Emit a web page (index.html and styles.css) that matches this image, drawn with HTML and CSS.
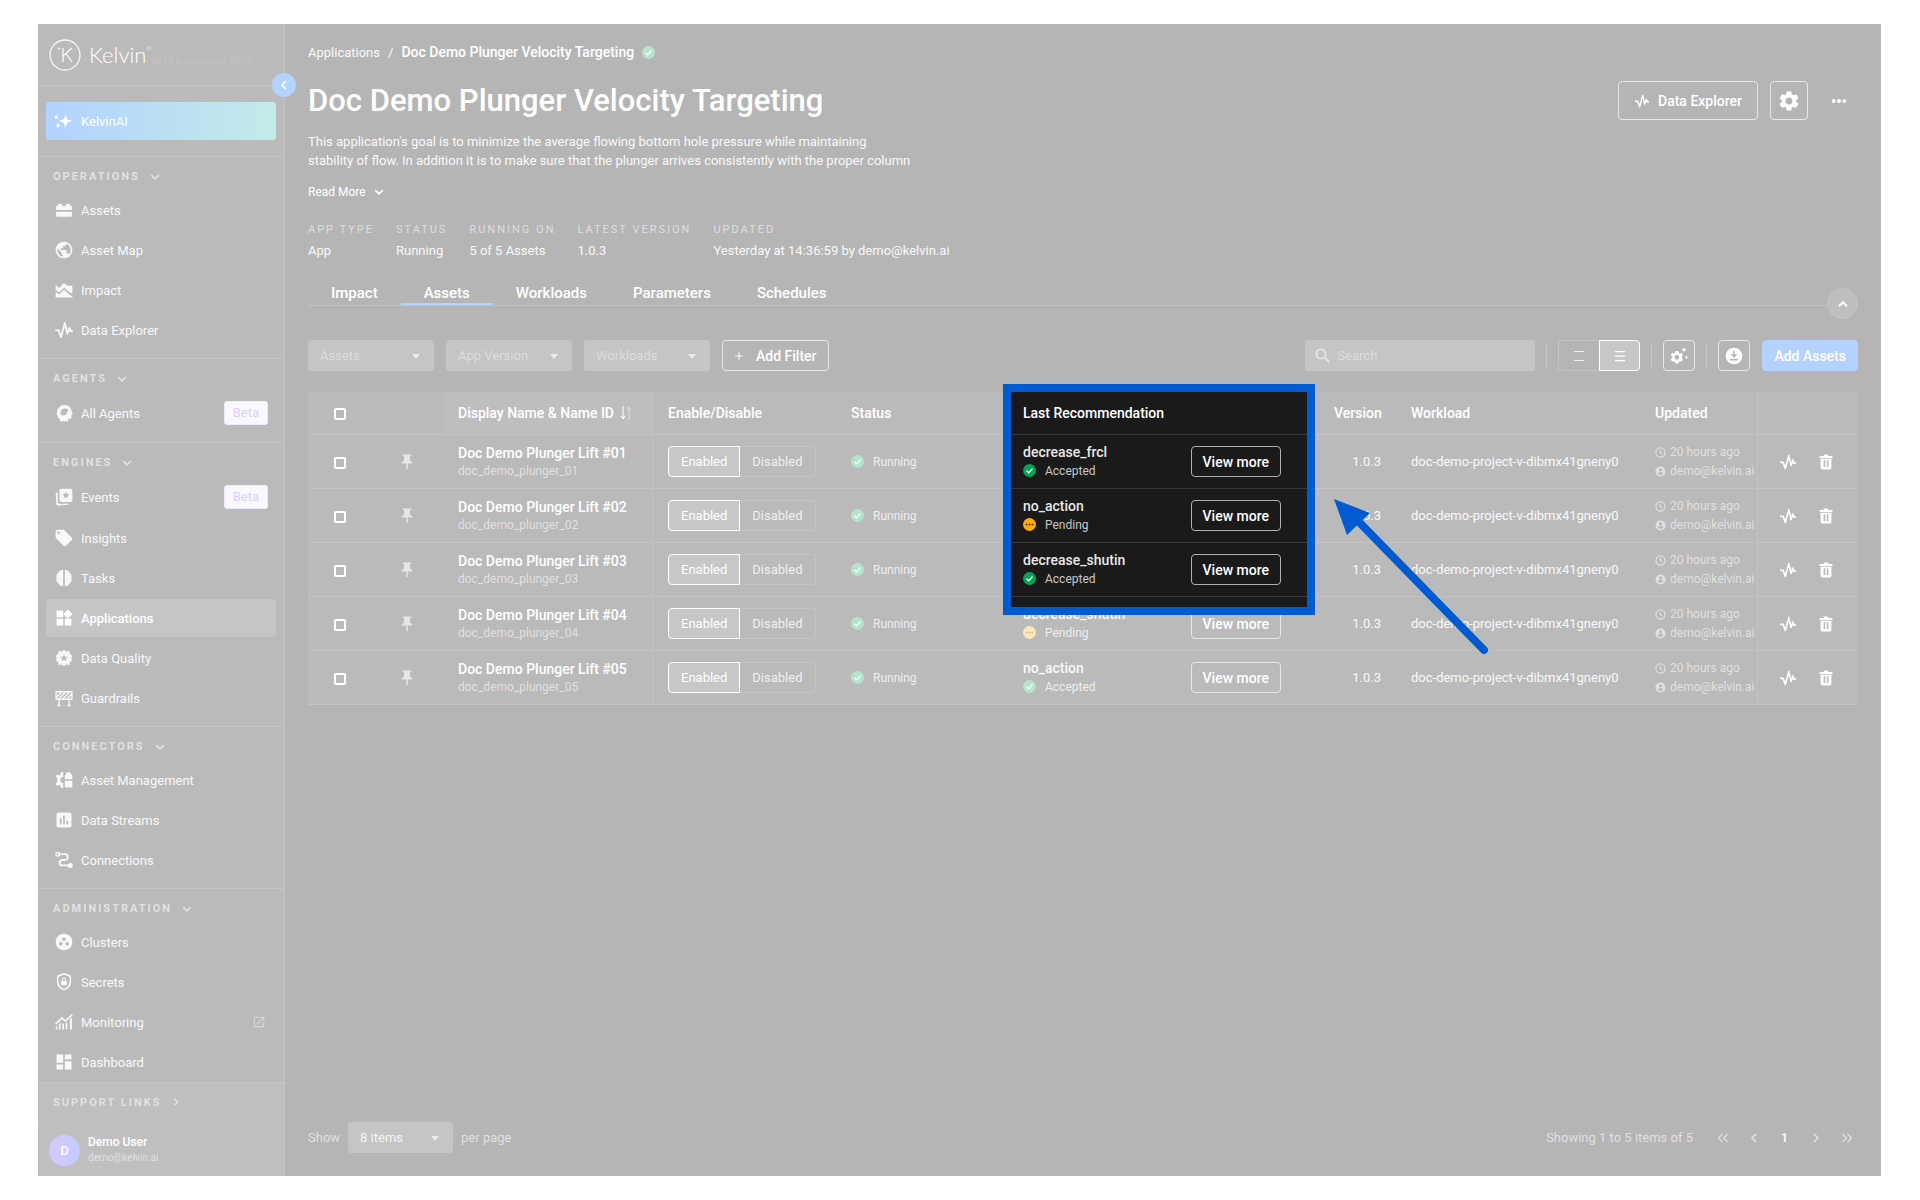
FILE: index.html
```html
<!DOCTYPE html>
<html lang="en">
<head>
  <meta charset="UTF-8">
  <meta name="viewport" content="width=device-width, initial-scale=1.0">
  <title>Doc Demo Plunger Velocity Targeting - Kelvin</title>
  <link rel="stylesheet" href="styles.css">
</head>
<body>
  <!-- Icon set -->
  <svg class="sprite" aria-hidden="true">
    <symbol id="i-sparkle" viewBox="0 0 24 24"><path d="M15 4l2 6 6 2-6 2-2 6-2-6-6-2 6-2zM6 14l1 2.500 2.500 1-2.500 1-1 2.500-1-2.500-2.500-1 2.500-1z"/><circle cx="4" cy="7.500" r="2"/></symbol>
    <symbol id="i-asset" viewBox="0 0 24 24"><path d="M2.500 12V7H5V4.500h4.500V7h5V4.500H19V7h2.500v5zM2.500 14h19v5a1 1 0 0 1-1 1h-17a1 1 0 0 1-1-1z"/></symbol>
    <symbol id="i-globe" viewBox="0 0 24 24"><path d="M12 2C6.480 2 2 6.480 2 12s4.480 10 10 10 10-4.480 10-10S17.520 2 12 2zm-1 17.930c-3.950-.49-7-3.850-7-7.930 0-.62.08-1.210.21-1.790L9 15v1c0 1.100.9 2 2 2v1.930zm6.900-2.540c-.26-.81-1-1.390-1.900-1.390h-1v-3c0-.55-.45-1-1-1H8v-2h2c.55 0 1-.45 1-1V7h2c1.100 0 2-.9 2-2v-.41c2.930 1.190 5 4.060 5 7.410 0 2.080-.8 3.970-2.100 5.390z"/></symbol>
    <symbol id="i-impact" viewBox="0 0 24 24"><path d="M2 6l4.500 3.500L12 3.500 16.500 7H22v8.500l-2 .5-8-7-5.500 6L2 12zM2 14.500l4.600 3 5.400-6 8 7.500h2v2H2z"/></symbol>
    <symbol id="i-pulse" viewBox="0 0 24 24"><path d="M1.500 12.500h4l3 8 4.500-17 3 13 2.500-7 1.500 4h2.500" fill="none" stroke="currentColor" stroke-width="2.200" stroke-linejoin="round"/></symbol>
    <symbol id="i-agent" viewBox="0 0 24 24"><path fill-rule="evenodd" d="M13 2.500A9.500 9.500 0 0 0 7 19.400V22h10v-3h2a2 2 0 0 0 2-2v-3l1.500-1L21 9.500a8.500 8.500 0 0 0-8-7zM8.500 14c-2-3 .5-8 5-7.500 2 .2 3.500 1.500 3.500 1.500s-1 7-6 7z"/></symbol>
    <symbol id="i-events" viewBox="0 0 24 24"><path fill-rule="evenodd" d="M8.500 2H20a2 2 0 0 1 2 2v12a2 2 0 0 1-2 2H8.500a2 2 0 0 1-2-2V4a2 2 0 0 1 2-2zm5.800 3.500l-1.200 3-3.200.2 2.500 2-.9 3.100 2.800-1.700 2.700 1.700-.8-3.100 2.500-2-3.200-.2z"/><path d="M2 7l2.500-.4V18a2 2 0 0 0 2 2H18v1L5 22.500a2 2 0 0 1-2.200-1.700z"/></symbol>
    <symbol id="i-tag" viewBox="0 0 24 24"><path d="M21.410 11.580l-9-9C12.050 2.220 11.550 2 11 2H4c-1.100 0-2 .9-2 2v7c0 .55.22 1.050.59 1.420l9 9c.36.36.86.58 1.410.58s1.050-.22 1.410-.59l7-7c.37-.36.59-.86.59-1.410s-.23-1.060-.59-1.420zM5.500 7C4.670 7 4 6.330 4 5.500S4.670 4 5.500 4 7 4.670 7 5.500 6.330 7 5.500 7z"/></symbol>
    <symbol id="i-tasks" viewBox="0 0 24 24"><path d="M11 2.500v19C8 22 6 20.500 5.500 18.500 3.500 17.500 2.500 15 3 12.500c-.8-3 .3-5.500 2.500-7C6 3.500 8.500 2 11 2.500zM13 2.500v19c3 .5 5-1 5.500-3 2-1 3-3.500 2.500-6 .8-3-.3-5.500-2.500-7-.5-2-3-3.500-5.500-3z"/></symbol>
    <symbol id="i-apps" viewBox="0 0 24 24"><path d="M13 13v8h8v-8h-8zM3 21h8v-8H3v8zM3 3v8h8V3H3zm13.660-1.310L11 7.340 16.660 13l5.660-5.660-5.660-5.650z"/></symbol>
    <symbol id="i-quality" viewBox="0 0 24 24"><path fill-rule="evenodd" d="M12 2l2.800 2.300 3.600-.7.700 3.600L22 9.500 20.500 12l1.500 2.500-2.900 2.300-.7 3.600-3.600-.7L12 22l-2.800-2.300-3.600.7-.7-3.600L2 14.500 3.500 12 2 9.500l2.900-2.300.7-3.600 3.600.7zm0 5.500l-1.200 3-3.200.2 2.500 2-.9 3.100 2.800-1.700 2.800 1.700-.9-3.100 2.500-2-3.200-.2z"/></symbol>
    <symbol id="i-guard" viewBox="0 0 24 24"><path fill="none" stroke="currentColor" stroke-width="1.600" d="M2.500 4.500h19v9h-19zM6 14v7M18 14v7M4 21h4M16 21h4M3 11l6-6M5 13.500L13.500 5M10 13.500L18.500 5M15 13.500l6-6"/></symbol>
    <symbol id="i-manage" viewBox="0 0 24 24"><path d="M13 11V6h1.500V3h5l2.500 4v4zM13 13h9v7a1 1 0 0 1-1 1h-8z"/><path fill-rule="evenodd" d="M11 2.500v6a3.500 3.500 0 0 0 0 7v6H8.500L8 19l-2-1-2.500 1L2 16.500l2-2V10L2 8l1.500-2.500L6 6.500 8 5l.5-2.500z"/></symbol>
    <symbol id="i-chart" viewBox="0 0 24 24"><path d="M19 3H5c-1.100 0-2 .9-2 2v14c0 1.100.9 2 2 2h14c1.100 0 2-.9 2-2V5c0-1.100-.9-2-2-2zM9 17H7v-7h2v7zm4 0h-2V7h2v10zm4 0h-2v-4h2v4z"/></symbol>
    <symbol id="i-route" viewBox="0 0 24 24"><path d="M5 5h8a3.500 3.500 0 0 1 0 7h-3a3.200 3.200 0 0 0 0 6.500h9" fill="none" stroke="currentColor" stroke-width="2.200"/><circle cx="4.500" cy="5" r="2.200" fill="none" stroke="currentColor" stroke-width="1.600"/><circle cx="19.500" cy="18.500" r="3"/></symbol>
    <symbol id="i-cluster" viewBox="0 0 24 24"><path fill-rule="evenodd" d="M12 2a10 10 0 1 0 0 20 10 10 0 0 0 0-20zm0 4.500a2.200 2.200 0 1 1 0 4.400 2.200 2.200 0 0 1 0-4.400zM8 12a2.200 2.200 0 1 1 0 4.400A2.200 2.200 0 0 1 8 12zm8 0a2.200 2.200 0 1 1 0 4.400 2.200 2.200 0 0 1 0-4.400z"/></symbol>
    <symbol id="i-shield" viewBox="0 0 24 24"><path d="M12 2.200l7.500 2.800v6.500c0 4.500-3 8.300-7.500 9.800-4.500-1.500-7.500-5.300-7.500-9.800V5z" fill="none" stroke="currentColor" stroke-width="2"/><path fill-rule="evenodd" d="M8.500 10.500h1V9a2.500 2.500 0 0 1 5 0v1.500h1V16h-7zm2.200 0h2.600V9a1.300 1.300 0 0 0-2.600 0z"/></symbol>
    <symbol id="i-monitor" viewBox="0 0 24 24"><path d="M2 14.500l7.500-7.500 4 4L22 3" fill="none" stroke="currentColor" stroke-width="2"/><path d="M2 18.500l2-2V21H2zM6 14.500l2-2V21H6zM10 13l2 1.500V21h-2zM14 14l2-1.500V21h-2zM19 9l2.500-2.500V21H19z"/></symbol>
    <symbol id="i-dashboard" viewBox="0 0 24 24"><path d="M3 13h8V3H3v10zm0 8h8v-6H3v6zm10 0h8V11h-8v10zm0-18v6h8V3h-8z"/></symbol>
    <symbol id="i-external" viewBox="0 0 24 24"><path d="M19 19H5V5h7V3H5a2 2 0 0 0-2 2v14a2 2 0 0 0 2 2h14c1.100 0 2-.9 2-2v-7h-2v7zM14 3v2h3.590l-9.830 9.830 1.410 1.410L19 6.410V10h2V3h-7z"/></symbol>
    <symbol id="i-down" viewBox="0 0 24 24"><path d="M3 7.500l9 9 9-9" fill="none" stroke="currentColor" stroke-width="4"/></symbol>
    <symbol id="i-up" viewBox="0 0 24 24"><path d="M4 16.500l8-8 8 8" fill="none" stroke="currentColor" stroke-width="4"/></symbol>
    <symbol id="i-left" viewBox="0 0 24 24"><path d="M16 4l-8 8 8 8" fill="none" stroke="currentColor" stroke-width="3.500"/></symbol>
    <symbol id="i-right" viewBox="0 0 24 24"><path d="M8 4l8 8-8 8" fill="none" stroke="currentColor" stroke-width="3.500"/></symbol>
    <symbol id="i-first" viewBox="0 0 24 24"><path d="M11 4l-8 8 8 8M21 4l-8 8 8 8" fill="none" stroke="currentColor" stroke-width="2.500"/></symbol>
    <symbol id="i-last" viewBox="0 0 24 24"><path d="M3 4l8 8-8 8M13 4l8 8-8 8" fill="none" stroke="currentColor" stroke-width="2.500"/></symbol>
    <symbol id="i-check" viewBox="0 0 24 24"><circle cx="12" cy="12" r="12"/><path d="M6.500 12.500l4 3.800 7-8" fill="none" stroke="#fff" stroke-width="2.400"/></symbol>
    <symbol id="i-pending" viewBox="0 0 24 24"><circle cx="12" cy="12" r="12"/><path d="M5 10.500h3v3H5zM10.500 10.500h3v3h-3zM16 10.500h3v3h-3z" fill="#332200"/></symbol>
    <symbol id="i-gear" viewBox="0 0 24 24"><path d="M19.140 12.940c.04-.3.06-.61.06-.94 0-.32-.02-.64-.07-.94l2.030-1.580c.18-.14.23-.41.12-.61l-1.920-3.320c-.12-.22-.37-.29-.59-.22l-2.390.96c-.5-.38-1.030-.7-1.620-.94l-.36-2.540c-.04-.24-.24-.41-.48-.41h-3.840c-.24 0-.43.17-.47.41l-.36 2.540c-.59.24-1.130.57-1.620.94l-2.390-.96c-.22-.08-.47 0-.59.22L2.740 8.870c-.12.21-.08.47.12.61l2.030 1.580c-.05.3-.09.63-.09.94s.02.64.07.94l-2.030 1.580c-.18.14-.23.41-.12.61l1.920 3.320c.12.22.37.29.59.22l2.390-.96c.5.38 1.030.7 1.620.94l.36 2.540c.05.24.24.41.48.41h3.840c.24 0 .44-.17.47-.41l.36-2.540c.59-.24 1.130-.56 1.620-.94l2.390.96c.22.08.47 0 .59-.22l1.920-3.320c.12-.22.07-.47-.12-.61l-2.010-1.580zM12 15.600c-1.980 0-3.600-1.620-3.600-3.600s1.620-3.600 3.600-3.600 3.600 1.620 3.600 3.600-1.620 3.600-3.600 3.600z"/></symbol>
    <symbol id="i-gear-spark" viewBox="0 0 24 24"><path fill-rule="evenodd" d="M7.800 6h3.400l.5 2.200 1.300.7 2.200-.8 1.700 3-1.600 1.600v1.600l1.600 1.600-1.700 3-2.200-.7-1.300.7-.5 2.100H7.800l-.5-2.100-1.300-.7-2.200.7-1.700-3 1.600-1.600v-1.600l-1.600-1.600 1.700-3 2.200.8 1.300-.7zM9.500 10.800a2.800 2.800 0 1 0 0 5.600 2.800 2.800 0 0 0 0-5.600z"/><path d="M18 1l.9 2.600 2.600.9-2.600.9L18 8l-.9-2.600-2.600-.9 2.600-.9zM21 11l.7 1.800 1.800.7-1.800.7L21 16l-.7-1.800-1.800-.7 1.800-.7z"/></symbol>
    <symbol id="i-download" viewBox="0 0 24 24"><path fill-rule="evenodd" d="M12 2a10 10 0 1 0 0 20 10 10 0 0 0 0-20zm-1 4h2v4h3l-4 4-4-4h3zm-4 9.500h10v2H7z"/></symbol>
    <symbol id="i-search" viewBox="0 0 24 24"><path d="M15.500 14h-.79l-.28-.27A6.471 6.471 0 0 0 16 9.500 6.500 6.500 0 1 0 9.500 16c1.610 0 3.090-.59 4.230-1.570l.27.28v.79l5 4.990L20.490 19l-4.990-5zm-6 0C7.010 14 5 11.990 5 9.500S7.010 5 9.500 5 14 7.010 14 9.500 11.990 14 9.500 14z"/></symbol>
    <symbol id="i-dots" viewBox="0 0 24 24"><circle cx="4" cy="12" r="3"/><circle cx="12" cy="12" r="3"/><circle cx="20" cy="12" r="3"/></symbol>
    <symbol id="i-plus" viewBox="0 0 24 24"><path d="M12 3v18M3 12h18" stroke="currentColor" stroke-width="2.500"/></symbol>
    <symbol id="i-rows2" viewBox="0 0 24 24"><path d="M2 3h20M2 21h20" stroke="currentColor" stroke-width="2"/></symbol>
    <symbol id="i-rows3" viewBox="0 0 24 24"><path d="M2 3h20M2 12h20M2 21h20" stroke="currentColor" stroke-width="2.500"/></symbol>
    <symbol id="i-pin" viewBox="0 0 24 24"><path d="M16 9V4h1c.55 0 1-.45 1-1s-.45-1-1-1H7c-.55 0-1 .45-1 1s.45 1 1 1h1v5c0 1.660-1.340 3-3 3v2h5.970v7l1 1 1-1v-7H19v-2c-1.660 0-3-1.340-3-3z"/></symbol>
    <symbol id="i-trash" viewBox="0 0 24 24"><path fill-rule="evenodd" d="M9 2h6v2h5.500v3h-17V4H9zM4.800 8h14.400v11.500a2.500 2.500 0 0 1-2.500 2.500H7.300a2.500 2.500 0 0 1-2.500-2.500zM8.800 9.500v9H11v-9zm4.200 0v9h2.200v-9z"/></symbol>
    <symbol id="i-clock" viewBox="0 0 24 24"><circle cx="12" cy="12" r="10" fill="none" stroke="currentColor" stroke-width="2.500"/><path d="M11.500 6.500V12l4.500 4" fill="none" stroke="currentColor" stroke-width="2.500"/></symbol>
    <symbol id="i-user" viewBox="0 0 24 24"><path fill-rule="evenodd" d="M12 1a11 11 0 1 0 0 22 11 11 0 0 0 0-22zM12 5a3.500 3.500 0 1 1 0 7 3.500 3.500 0 0 1 0-7zm-6 11c0-2 4-3 6-3s6 1 6 3a7 7 0 0 1-12 0z"/></symbol>
    <symbol id="i-sort" viewBox="0 0 12 16"><path d="M3 1v13M1 11l2 3 2-3" fill="none" stroke="currentColor"/><path d="M9 15V2M7 5l2-3 2 3" fill="none" stroke="#8a8a8a"/></symbol>
  </svg>

  <div class="app">
    <aside class="sidebar">
      <div class="brand">
        <svg class="brand-mark" viewBox="0 0 32 32" aria-hidden="true"><circle cx="16" cy="16" r="15" fill="none" stroke="currentColor" stroke-width="1.300"/><circle cx="10" cy="9.500" r="1"/><path d="M14 9v14M23 9l-9 8M17 14.500l6 8.500" fill="none" stroke="currentColor" stroke-width="1.300"/></svg>
        <span class="brand-name">Kelvin<sup>°</sup></span>
        <span class="brand-env">BETA Environment (DEV)</span>
        <button class="collapse" aria-label="Collapse menu"><svg class="icon-12"><use href="#i-left"/></svg></button>
      </div>
      <div class="ai-wrap">
        <a class="ai-link" href="#"><svg class="icon-20"><use href="#i-sparkle"/></svg>KelvinAI</a>
      </div>
      <nav class="nav" id="nav"></nav>
      <div class="side-foot">
        <button class="section-title support">SUPPORT LINKS<svg class="icon-10"><use href="#i-right"/></svg></button>
        <div class="user">
          <span class="avatar">D</span>
          <div>
            <div class="user-name">Demo User</div>
            <div class="user-mail">demo@kelvin.ai</div>
          </div>
        </div>
      </div>
    </aside>

    <main class="main">
      <div class="breadcrumb">
        <a href="#">Applications</a><span>/</span><b>Doc Demo Plunger Velocity Targeting</b>
        <svg class="icon-13 ok"><use href="#i-check"/></svg>
      </div>

      <header class="page-head">
        <div>
          <h1>Doc Demo Plunger Velocity Targeting</h1>
          <p class="desc">This application's goal is to minimize the average flowing bottom hole pressure while maintaining<br>stability of flow. In addition it is to make sure that the plunger arrives consistently with the proper column</p>
          <button class="read-more">Read More<svg class="icon-10"><use href="#i-down"/></svg></button>
        </div>
        <div class="head-actions">
          <button class="btn-lg"><svg class="icon-16"><use href="#i-pulse"/></svg>Data Explorer</button>
          <button class="btn-lg btn-square" aria-label="Settings"><svg class="icon-24"><use href="#i-gear"/></svg></button>
          <button class="btn-more" aria-label="More"><svg class="icon-16"><use href="#i-dots"/></svg></button>
        </div>
      </header>

      <dl class="meta">
        <div><dt>APP TYPE</dt><dd>App</dd></div>
        <div><dt>STATUS</dt><dd>Running</dd></div>
        <div><dt>RUNNING ON</dt><dd>5 of 5 Assets</dd></div>
        <div><dt>LATEST VERSION</dt><dd>1.0.3</dd></div>
        <div><dt>UPDATED</dt><dd>Yesterday at 14:36:59 by demo@kelvin.ai</dd></div>
      </dl>

      <div class="tabs">
        <a href="#">Impact</a>
        <a href="#" class="active">Assets</a>
        <a href="#">Workloads</a>
        <a href="#">Parameters</a>
        <a href="#">Schedules</a>
        <button class="fold" aria-label="Hide details"><svg class="icon-12"><use href="#i-up"/></svg></button>
      </div>

      <div class="toolbar">
        <span class="select"><select aria-label="Assets"><option>Assets</option></select></span>
        <span class="select"><select aria-label="App Version"><option>App Version</option></select></span>
        <span class="select"><select aria-label="Workloads"><option>Workloads</option></select></span>
        <button class="btn"><svg class="icon-10"><use href="#i-plus"/></svg>Add Filter</button>
        <div class="search">
          <svg class="icon-20"><use href="#i-search"/></svg>
          <input type="text" placeholder="Search" aria-label="Search">
        </div>
        <span class="divider"></span>
        <div class="toggle density">
          <button aria-label="Comfortable rows"><svg class="icon-12"><use href="#i-rows2"/></svg></button>
          <button class="on" aria-label="Compact rows"><svg class="icon-12"><use href="#i-rows3"/></svg></button>
        </div>
        <span class="divider"></span>
        <button class="btn btn-icon" aria-label="Table settings"><svg class="icon-20"><use href="#i-gear-spark"/></svg></button>
        <span class="divider"></span>
        <button class="btn btn-icon" aria-label="Download"><svg class="icon-20"><use href="#i-download"/></svg></button>
        <button class="btn btn-primary">Add Assets</button>
      </div>

      <div class="table-wrap">
        <table>
          <colgroup>
            <col class="c-check"><col class="c-pin"><col class="c-name"><col class="c-enable"><col class="c-status">
            <col class="c-rec"><col class="c-version"><col><col class="c-updated"><col class="c-actions">
          </colgroup>
          <thead>
            <tr>
              <th class="center"><input type="checkbox" aria-label="Select all"></th>
              <th></th>
              <th class="sorted"><span>Display Name &amp; Name ID<svg class="sort"><use href="#i-sort"/></svg></span></th>
              <th>Enable/Disable</th>
              <th>Status</th>
              <th>Last Recommendation</th>
              <th class="right">Version</th>
              <th>Workload</th>
              <th>Updated</th>
              <th class="edge"></th>
            </tr>
          </thead>
          <tbody id="assetRows"></tbody>
        </table>

        <!-- Spotlight and pointer over the recommendation column -->
        <div class="spotlight"></div>
        <svg class="arrow" viewBox="0 0 160 160" aria-hidden="true"><path d="M24 22L150 151" stroke="#005bd0" stroke-width="8" stroke-linecap="round"/><path d="M0 0l36 14-23 22z" fill="#005bd0"/></svg>
      </div>

      <footer class="pager">
        <label for="pageSize">Show</label>
        <span class="select page-size"><select id="pageSize"><option>8 items</option></select></span>
        <span>per page</span>
        <span class="count">Showing 1 to 5 items of 5</span>
        <button aria-label="First page"><svg class="icon-12"><use href="#i-first"/></svg></button>
        <button aria-label="Previous page"><svg class="icon-12"><use href="#i-left"/></svg></button>
        <button class="current">1</button>
        <button aria-label="Next page"><svg class="icon-12"><use href="#i-right"/></svg></button>
        <button aria-label="Last page"><svg class="icon-12"><use href="#i-last"/></svg></button>
      </footer>
    </main>
  </div>

  <script>
    const sections = [
      ["OPERATIONS", [["Assets", "asset"], ["Asset Map", "globe"], ["Impact", "impact"], ["Data Explorer", "pulse"]]],
      ["AGENTS", [["All Agents", "agent", "beta"]]],
      ["ENGINES", [["Events", "events", "beta"], ["Insights", "tag"], ["Tasks", "tasks"], ["Applications", "apps", "active"], ["Data Quality", "quality"], ["Guardrails", "guard"]]],
      ["CONNECTORS", [["Asset Management", "manage"], ["Data Streams", "chart"], ["Connections", "route"]]],
      ["ADMINISTRATION", [["Clusters", "cluster"], ["Secrets", "shield"], ["Monitoring", "monitor", "external"], ["Dashboard", "dashboard"]]]
    ];

    const extras = {
      beta: `<span class="badge">Beta</span>`,
      external: `<svg class="icon-14 external-mark"><use href="#i-external"/></svg>`
    };

    document.getElementById("nav").innerHTML = sections.map(([title, items]) => `
      <section class="nav-section">
        <button class="section-title">${title}<svg class="icon-10"><use href="#i-down"/></svg></button>
        ${items.map(([label, icon, flag]) => `
          <a class="nav-item ${flag || ""}" href="#"><svg class="icon-20"><use href="#i-${icon}"/></svg>${label}${extras[flag] || ""}</a>
        `).join("")}
      </section>
    `).join("");

    const assets = [
      ["01", "decrease_frcl", "Accepted"],
      ["02", "no_action", "Pending"],
      ["03", "decrease_shutin", "Accepted"],
      ["04", "decrease_shutin", "Pending"],
      ["05", "no_action", "Accepted"]
    ];

    document.getElementById("assetRows").innerHTML = assets.map(([id, action, state]) => `
      <tr>
        <td class="center"><input type="checkbox" aria-label="Select asset ${id}"></td>
        <td class="center pin"><svg class="icon-18"><use href="#i-pin"/></svg></td>
        <td class="name"><b>Doc Demo Plunger Lift #${id}</b><small>doc_demo_plunger_${id}</small></td>
        <td><div class="toggle"><button class="on">Enabled</button><button>Disabled</button></div></td>
        <td><span class="state"><svg class="icon-13 ok"><use href="#i-check"/></svg>Running</span></td>
        <td class="rec-cell">
          <div class="rec">
            <div>
              <b>${action}</b>
              <span class="state"><svg class="icon-13 ${state === "Pending" ? "wait" : "ok"}"><use href="#i-${state === "Pending" ? "pending" : "check"}"/></svg>${state}</span>
            </div>
            <button class="btn">View more</button>
          </div>
        </td>
        <td class="right">1.0.3</td>
        <td>doc-demo-project-v-dibmx41gneny0</td>
        <td class="updated">
          <span><svg class="icon-11"><use href="#i-clock"/></svg>20 hours ago</span>
          <span><svg class="icon-11"><use href="#i-user"/></svg>demo@kelvin.ai</span>
        </td>
        <td class="edge">
          <div class="row-actions">
            <button aria-label="Explore"><svg class="icon-18"><use href="#i-pulse"/></svg></button>
            <button aria-label="Delete"><svg class="icon-18"><use href="#i-trash"/></svg></button>
          </div>
        </td>
      </tr>
    `).join("");
  </script>
</body>
</html>
```

FILE: styles.css
```css
/* Reset & Base */
* {
  margin: 0;
  padding: 0;
  box-sizing: border-box;
}
body {
  background: #fff;
  padding: 24px 39px 24px 38px;
  font-family: Roboto, sans-serif;
  font-size: 13px;
  color: #e8e8e8;
}
button, input, select {
  font: inherit;
  color: inherit;
  background: none;
  border: none;
}
button {
  cursor: pointer;
  display: inline-flex;
  align-items: center;
  justify-content: center;
}
a {
  color: inherit;
  text-decoration: none;
}
b, th {
  font-size: 14px;
  font-weight: 500;
}
svg {
  fill: currentColor;
  flex: none;
}
.sprite { position: absolute; width: 0; height: 0; }
.icon-10 { width: 10px; height: 10px; }
.icon-11 { width: 11px; height: 11px; }
.icon-12 { width: 12px; height: 12px; }
.icon-13 { width: 13px; height: 13px; }
.icon-14 { width: 14px; height: 14px; }
.icon-16 { width: 16px; height: 16px; }
.icon-18 { width: 18px; height: 18px; }
.icon-20 { width: 20px; height: 20px; }
.icon-24 { width: 24px; height: 24px; }
.ok { color: #05a558; }
.wait { color: #ffab00; }

.app {
  position: relative;
  display: flex;
  height: calc(100vh - 48px);
  overflow: hidden;
  background: #080808;
}

/* Sidebar */
.sidebar {
  width: 247px;
  flex: none;
  display: flex;
  flex-direction: column;
  background: #1a1a1a;
  border-right: 1px solid #383838;
}
.brand {
  position: relative;
  display: flex;
  align-items: center;
  height: 62px;
  padding-left: 11px;
  border-bottom: 1px solid #383838;
}
.brand-mark {
  width: 32px;
  height: 32px;
}
.brand-name {
  margin-left: 8px;
  font-family: Lato, sans-serif;
  font-size: 22px;
  font-weight: 300;
  color: #fff;
}
.brand-name sup {
  font-size: 12px;
}
.brand-env {
  margin-top: 12px;
  font-size: 9px;
  font-weight: 700;
  color: #2f2f2f;
}
.collapse {
  position: absolute;
  right: -12px;
  bottom: -12px;
  z-index: 1;
  width: 24px;
  height: 24px;
  border-radius: 50%;
  background: #0069ff;
  color: #fff;
}
.ai-wrap {
  padding: 16px 8px;
}
.ai-link {
  display: flex;
  align-items: center;
  gap: 8px;
  height: 38px;
  padding-left: 7px;
  border-radius: 3px;
  background: linear-gradient(90deg, #0069ff, #34bcaf);
  color: #fff;
}
.nav {
  flex: 1;
  min-height: 0;
  overflow: hidden;
}
.nav-section {
  padding: 6px 8px 8px;
  border-top: 1px solid #383838;
}
.section-title {
  display: flex;
  justify-content: flex-start;
  gap: 10px;
  height: 27px;
  padding-left: 7px;
  font-size: 11px;
  font-weight: 700;
  letter-spacing: 2px;
  color: #9a9a9a;
}
.nav-item {
  display: flex;
  align-items: center;
  gap: 7px;
  height: 40px;
  padding-left: 8px;
  border-radius: 4px;
  border: solid transparent;
  border-width: 1px 0;
  background-clip: padding-box;
}
.nav-item.active {
  background-color: #3d3d3d;
  font-weight: 500;
  color: #fff;
}
.nav-item.beta {
  height: 42px;
}
.badge {
  margin: 0 8px 0 auto;
  padding: 0 8px;
  line-height: 22px;
  border: 1px solid #c8b4ff;
  border-radius: 3px;
  background: #ece4ff;
  color: #8a60ff;
}
.external-mark {
  margin: 0 10px 0 auto;
  color: #777;
}
.side-foot {
  background: #2a2a2a;
  border-top: 1px solid #444;
}
.support {
  width: 100%;
  height: 39px;
  padding-left: 15px;
  border-bottom: 1px solid #3a3a3a;
}
.user {
  display: flex;
  align-items: center;
  gap: 8px;
  height: 54px;
  padding: 2px 0 0 11px;
}
.avatar {
  width: 31px;
  height: 31px;
  border-radius: 50%;
  background: linear-gradient(90deg, #7048ff, #3755ff);
  color: #fff;
  font-weight: 500;
  line-height: 31px;
  text-align: center;
}
.user-name {
  font-size: 12px;
  font-weight: 500;
  line-height: 16px;
  color: #fff;
}
.user-mail {
  font-size: 10px;
  line-height: 16px;
  color: #999;
}

/* Page header */
.main {
  flex: 1;
  min-width: 0;
  display: flex;
  flex-direction: column;
  padding: 18px 23px 23px 23px;
}
.breadcrumb {
  display: flex;
  align-items: center;
  gap: 8px;
  height: 20px;
}
.breadcrumb b {
  color: #fff;
}
.page-head {
  display: flex;
  justify-content: space-between;
  margin-top: 19px;
}
h1 {
  font-size: 31px;
  line-height: 40px;
  font-weight: 500;
  color: #fff;
}
.desc {
  margin-top: 11px;
  line-height: 19px;
}
.read-more {
  height: 20px;
  margin-top: 12px;
  gap: 8px;
  font-size: 12px;
  color: #fff;
}
.head-actions {
  display: flex;
  align-items: flex-start;
  gap: 12px;
}
.btn-lg {
  height: 39px;
  padding: 0 15px;
  gap: 8px;
  border: 1px solid #b0b0b0;
  border-radius: 4px;
  font-size: 14px;
  font-weight: 500;
  color: #fff;
}
.btn-square {
  width: 38px;
  padding: 0;
}
.btn-more {
  width: 38px;
  height: 39px;
  color: #fff;
}
.meta {
  display: flex;
  gap: 22px;
  margin-top: 18px;
}
.meta dt {
  font-size: 11px;
  line-height: 20px;
  letter-spacing: 2px;
  color: #909090;
}
.meta dd {
  line-height: 22px;
}
.tabs {
  position: relative;
  display: flex;
  margin-top: 20px;
  border-bottom: 1px solid #3a3a3a;
}
.tabs a {
  padding: 0 23px;
  line-height: 23px;
  font-size: 15px;
  font-weight: 500;
  color: #fff;
}
.tabs a.active {
  box-shadow: inset 0 -2px #0069ff;
}
.fold {
  position: absolute;
  right: 0;
  bottom: -14px;
  width: 31px;
  height: 31px;
  border-radius: 50%;
  background: #262626;
  border: 1px solid #383838;
  color: #fff;
}

/* Toolbar */
.toolbar {
  display: flex;
  align-items: center;
  gap: 12px;
  margin-top: 34px;
}
.select {
  position: relative;
  width: 126px;
}
.select::after {
  content: "";
  position: absolute;
  right: 14px;
  top: 14px;
  border: 4px solid transparent;
  border-top: 5px solid #bbb;
  pointer-events: none;
}
.select select {
  appearance: none;
  width: 100%;
  height: 31px;
  padding: 0 12px;
  border-radius: 3px;
  background: #3d3d3d;
  color: #8c8c8c;
}
.btn {
  height: 31px;
  padding: 0 11px;
  gap: 12px;
  border: 1px solid #b0b0b0;
  border-radius: 4px;
  font-size: 14px;
  font-weight: 500;
  white-space: nowrap;
  color: #fff;
}
.btn-icon {
  width: 32px;
  padding: 0;
}
.btn-primary {
  background: #0069ff;
  border-color: #0069ff;
}
.search {
  display: flex;
  align-items: center;
  gap: 4px;
  width: 230px;
  height: 31px;
  margin-left: auto;
  padding-left: 8px;
  border-radius: 3px;
  background: #3d3d3d;
  color: #aaa;
}
.search input {
  width: 100%;
  outline: none;
}
.search input::placeholder {
  color: #8c8c8c;
}
.divider {
  width: 1px;
  height: 24px;
  margin: 0 -1px;
  background: #444;
}
.toggle {
  display: inline-flex;
  vertical-align: middle;
}
.toggle button {
  height: 31px;
  padding: 0 12px;
  border: 1px solid #383838;
  border-left: none;
  border-radius: 0 4px 4px 0;
  color: #ccc;
}
.toggle button.on {
  border: 1px solid #fff;
  border-radius: 4px 0 0 4px;
  background: #444;
  color: #fff;
}
.density button {
  width: 41px;
  padding: 0;
  border: 1px solid #383838;
  border-right: none;
  border-radius: 4px 0 0 4px;
}
.density button.on {
  border-radius: 0 4px 4px 0;
}

/* Asset table */
.table-wrap {
  position: relative;
  margin-top: 21px;
}
table {
  width: 100%;
  table-layout: fixed;
  border-collapse: separate;
  border-spacing: 0;
  background: #1a1a1a;
}
.c-check { width: 63px; }
.c-pin { width: 72px; }
.c-name { width: 210px; }
.c-enable { width: 183px; }
.c-status { width: 172px; }
.c-rec { width: 311px; }
.c-version { width: 77px; }
.c-updated { width: 117px; }
.c-actions { width: 101px; }
th, td {
  height: 54px;
  padding: 0 15px;
  border-bottom: 1px solid #383838;
  text-align: left;
  white-space: nowrap;
}
th {
  height: 43px;
  color: #fff;
}
th.center, td.center {
  padding: 0;
  text-align: center;
}
th.right, td.right {
  text-align: right;
}
th.sorted {
  background: #262626;
}
th.sorted span {
  display: flex;
  align-items: center;
  gap: 6px;
}
.sort {
  width: 12px;
  height: 16px;
}
th.sorted, td.name {
  border-right: 1px solid #383838;
}
.edge {
  border-left: 1px solid #383838;
}
input[type="checkbox"] {
  appearance: none;
  width: 12px;
  height: 12px;
  border: 2px solid #fff;
  border-radius: 2px;
  vertical-align: middle;
}
.pin {
  color: #aaa;
}
.pin svg {
  vertical-align: middle;
}
.name b, .name small {
  display: block;
  line-height: 18px;
}
.name b {
  color: #fff;
}
.name small {
  font-size: 12px;
  color: #999;
}
.state {
  display: flex;
  align-items: center;
  gap: 9px;
  font-size: 12px;
  line-height: 20px;
  color: #c8c8c8;
}
td.rec-cell {
  padding-right: 38px;
}
.rec {
  display: flex;
  align-items: center;
  justify-content: space-between;
}
.rec b {
  display: block;
  line-height: 18px;
}
.updated span {
  display: flex;
  align-items: center;
  gap: 4px;
  font-size: 12px;
  line-height: 19px;
  color: #999;
}
td.updated {
  padding-right: 0;
}
.row-actions {
  display: flex;
  gap: 20px;
  padding-left: 6px;
}
.row-actions button {
  color: #fff;
}

.spotlight {
  position: absolute;
  z-index: 10;
  left: 695px;
  top: -8px;
  width: 312px;
  height: 231px;
  border: 8px solid #005bd0;
  box-shadow: 0 0 0 3000px rgba(255, 255, 255, 0.7);
  pointer-events: none;
}
.arrow {
  position: absolute;
  z-index: 11;
  left: 1026px;
  top: 107px;
  width: 160px;
  height: 160px;
}

/* Pagination */
.pager {
  display: flex;
  align-items: center;
  gap: 8px;
  margin-top: auto;
  color: #999;
}
.page-size {
  width: 105px;
}
.page-size select {
  color: #ddd;
}
.pager .count {
  margin: 0 10px 0 auto;
}
.pager button {
  width: 23px;
  height: 24px;
}
.pager .current {
  font-weight: 500;
  color: #fff;
}
```
